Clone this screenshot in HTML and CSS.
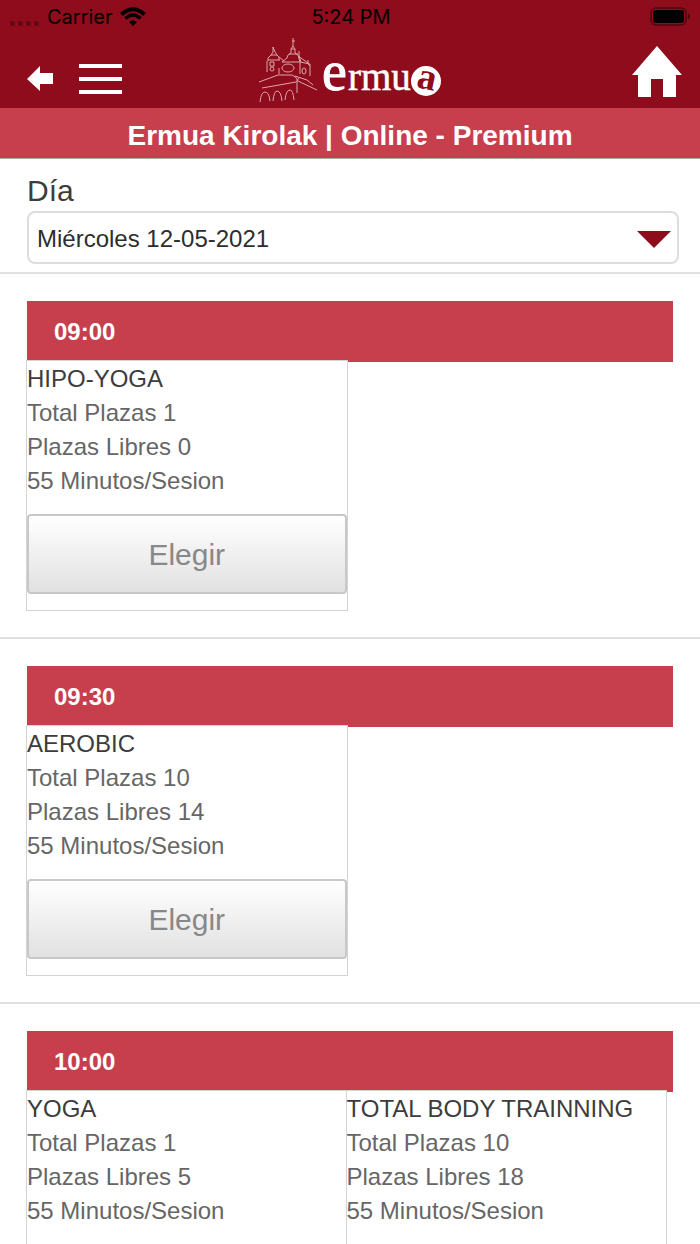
FILE: index.html
```html
<!DOCTYPE html>
<html lang="es">
<head>
    <meta charset="UTF-8">
    <meta name="viewport" content="width=device-width, initial-scale=1.0">
    <title>Ermua Kirolak</title>
    <link rel="stylesheet" href="styles.css">
</head>
<body>
    <header>
        <div class="status-bar">
            <div class="carrier">
                <svg class="signal" width="30" height="6" viewBox="0 0 30 6" fill="#000" opacity="0.3">
                    <rect x="0" y="1" width="5" height="5" rx="2"/>
                    <rect x="8" y="1" width="5" height="5" rx="2"/>
                    <rect x="16" y="1" width="5" height="5" rx="2"/>
                    <rect x="24" y="1" width="5" height="5" rx="2"/>
                </svg>
                <span>Carrier</span>
                <svg width="26" height="20" viewBox="0 0 26 20">
                    <path d="M1.500 7.500Q13 -3 24.500 7.500" fill="none" stroke="#000" stroke-width="4"/>
                    <path d="M5.500 11.500Q13 4.500 20.500 11.500" fill="none" stroke="#000" stroke-width="3.500"/>
                    <path d="M9 15Q13 11.500 17 15L13 19Z"/>
                </svg>
            </div>
            <span class="time">5:24 PM</span>
            <div class="battery">
                <svg width="42" height="20" viewBox="0 0 42 20">
                    <rect x="1" y="1" width="35" height="17" rx="5" fill="none" stroke="#000" stroke-opacity="0.45" stroke-width="1.500"/>
                    <rect x="3" y="3" width="31" height="13" rx="3"/>
                    <path d="M38 6.500Q42 9.500 38 12.500Z" fill-opacity="0.5"/>
                </svg>
            </div>
        </div>
        <nav class="nav-bar">
            <div class="nav-left">
                <a href="#" aria-label="Volver">
                    <svg width="26" height="26" viewBox="0 0 26 26" fill="#fff"><path d="M0 13L13 0V7H26V18H13V25Z"/></svg>
                </a>
                <button type="button" class="menu" aria-label="Menú">
                    <span></span>
                    <span></span>
                    <span></span>
                </button>
            </div>
            <svg class="logo" width="182" height="66" viewBox="0 0 182 66">
                <!-- iglesia y puente -->
                <g fill="none" stroke="#dfa5ab" stroke-width="1">
                    <path d="M8 34V23M9 23V20L12 17L14 14V9L16 14L18 17L20 19V22M9 22H21M12 17H18M20 19L25 23"/>
                    <path d="M34 0V8L32 11V15L29 17L28 20L23 24H41M34 8L36 11V15L39 17L41 24M32 11H36M30 16H39M33 3H36"/>
                    <path d="M40 13V18L42 24M39 18L49 25M49 22V26L51 28M41 24L51 26M41 24V36M51 26V38"/>
                    <path d="M11 24H15V28H11ZM20 30V36"/>
                    <circle cx="13" cy="31" r="2"/>
                    <ellipse cx="29" cy="30" rx="6" ry="4"/>
                    <ellipse cx="45" cy="33" rx="2" ry="3"/>
                    <path d="M0 44L19 37H33Q37 38 39 43L58 52M36 38L48 42L54 47M3 50L37 44L40 40M38 43V55"/>
                    <path d="M1 64Q2 54 6 54Q10 54 11 63M14 63Q15 53 18 53Q22 53 23 63M26 62Q27 52 31 52Q34 52 35 62"/>
                </g>
                <g fill="#fff" font-family="'Liberation Serif', 'Times New Roman', serif">
                    <text x="63" y="52" font-size="56" stroke="#fff" stroke-width="1">e</text>
                    <text x="89" y="52" font-size="39" stroke="#fff" stroke-width="0.500">rmu</text>
                    <circle cx="167" cy="43" r="15"/>
                    <text x="158" y="51" font-size="38" font-weight="bold" fill="#8e0c1b" transform="rotate(12 167 43)">a</text>
                </g>
            </svg>
            <a class="home" href="#" aria-label="Inicio">
                <svg width="50" height="51" viewBox="0 0 50 51" fill="#fff"><path d="M25 0L50 29H44V51H31V33H19V51H6V29H0Z"/></svg>
            </a>
        </nav>
        <h1>Ermua Kirolak | Online - Premium</h1>
    </header>

    <main>
        <form class="day">
            <label for="dia">Día</label>
            <div class="select-box">
                <select id="dia" name="dia">
                    <option>Miércoles 12-05-2021</option>
                </select>
            </div>
        </form>

        <section>
            <h2>09:00</h2>
            <div class="cards">
                <div class="card">
                    <h3>HIPO-YOGA</h3>
                    <p>Total Plazas 1</p>
                    <p>Plazas Libres 0</p>
                    <p>55 Minutos/Sesion</p>
                    <button type="button" class="choose">Elegir</button>
                </div>
            </div>
        </section>

        <section>
            <h2>09:30</h2>
            <div class="cards">
                <div class="card">
                    <h3>AEROBIC</h3>
                    <p>Total Plazas 10</p>
                    <p>Plazas Libres 14</p>
                    <p>55 Minutos/Sesion</p>
                    <button type="button" class="choose">Elegir</button>
                </div>
            </div>
        </section>

        <section>
            <h2>10:00</h2>
            <div class="cards">
                <div class="card">
                    <h3>YOGA</h3>
                    <p>Total Plazas 1</p>
                    <p>Plazas Libres 5</p>
                    <p>55 Minutos/Sesion</p>
                    <button type="button" class="choose">Elegir</button>
                </div>
                <div class="card">
                    <h3>TOTAL BODY TRAINNING</h3>
                    <p>Total Plazas 10</p>
                    <p>Plazas Libres 18</p>
                    <p>55 Minutos/Sesion</p>
                    <button type="button" class="choose">Elegir</button>
                </div>
            </div>
        </section>
    </main>
</body>
</html>
```

FILE: styles.css
```css
* {
    box-sizing: border-box;
}
body {
    font-family: 'Liberation Sans', Arial, sans-serif;
    font-size: 24px;
    color: #3c3c3c;
    background: #ffffff;
    margin: 0;
    display: flex;
    flex-direction: column;
    height: 100vh;
    overflow: hidden;
}
header {
    background: #8e0c1b;
    flex-shrink: 0;
}
.status-bar {
    display: grid;
    grid-template-columns: 1fr auto 1fr;
    align-items: center;
    height: 34px;
    padding: 0 8px 0 10px;
    font-family: Inter, sans-serif;
    font-size: 20px;
    color: #000000;
}
.carrier {
    display: flex;
    align-items: center;
    gap: 7px;
}
.signal {
    margin-top: 11px;
}
.battery {
    display: flex;
    justify-content: flex-end;
}
.nav-bar {
    display: grid;
    grid-template-columns: 1fr auto 1fr;
    align-items: center;
    height: 74px;
    padding: 0 18px;
}
.nav-bar svg {
    display: block;
}
.nav-left {
    display: flex;
    align-items: center;
    gap: 26px;
    padding: 16px 0 0 9px;
}
.menu {
    display: flex;
    flex-direction: column;
    gap: 9px;
    width: 43px;
    padding: 0;
    border: none;
    background: none;
}
.menu span {
    width: 100%;
    height: 4px;
    background: #ffffff;
}
.home {
    justify-self: end;
}
h1 {
    margin: 0;
    height: 51px;
    line-height: 56px;
    font-size: 28px;
    text-align: center;
    color: #ffffff;
    background: #c73e4d;
    border-bottom: 1px solid #aaaaaa;
}
main {
    flex: 1;
    overflow-y: auto;
    scrollbar-width: none;
}
.day {
    padding: 14px 21px 8px 27px;
    border-bottom: 2px solid #e0e0e0;
}
.day label {
    display: block;
    height: 38px;
    font-size: 30px;
    line-height: 36px;
}
.select-box {
    position: relative;
}
.select-box::after {
    content: "";
    position: absolute;
    right: 8px;
    top: 20px;
    border: 17px solid transparent;
    border-top-color: #8e0c1b;
    border-bottom: 0;
    pointer-events: none;
}
select {
    appearance: none;
    display: block;
    width: 100%;
    height: 53px;
    padding: 2px 48px 0 8px;
    font: inherit;
    color: #2d2d2d;
    background: #ffffff;
    border: 2px solid #dddddd;
    border-radius: 8px;
}
section {
    padding: 27px 27px 26px;
    border-bottom: 2px solid #e0e0e0;
}
h2 {
    margin: 0;
    padding-left: 27px;
    font-size: 24px;
    line-height: 61px;
    color: #ffffff;
    background: #c73e4d;
}
.cards {
    display: flex;
    margin: -2px 6px 0 -1px;
}
.card {
    flex: 0 0 calc(50% + 1px);
    padding: 1px 0 16px;
    background: #ffffff;
    border: 1px solid #d4d4d4;
}
.card + .card {
    margin-left: -2px;
}
h3, p {
    margin: 0;
    font-size: 24px;
    font-weight: normal;
    line-height: 34px;
}
p {
    color: #666666;
}
.choose {
    display: block;
    width: 100%;
    height: 80px;
    margin-top: 16px;
    padding: 2px 0 0;
    font-family: inherit;
    font-size: 30px;
    color: #888888;
    background: linear-gradient(#ffffff, #e1e1e1);
    border: 2px solid #c8c8c8;
    border-radius: 4px;
}
```
